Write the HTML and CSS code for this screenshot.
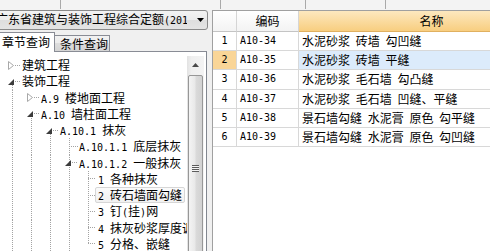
FILE: index.html
```html
<!DOCTYPE html>
<html lang="zh-CN">
<head>
<meta charset="utf-8">
<title>定额查询</title>
<link rel="stylesheet" href="styles.css">
</head>
<body>
<div class="top">
  <span class="tc w60"></span><span class="tc w160"></span><span class="tc w85"></span><span class="tc w80"></span>
</div>
<div class="main">
  <div class="left">
    <div class="combo">
      <span class="combo-text">广东省建筑与装饰工程综合定额<span class="m">(2010)</span></span>
      <span class="combo-btn"><svg width="7" height="4" viewBox="0 0 7 4"><path d="M0 0H7L3.5 4Z" fill="#000"/></svg></span>
    </div>
    <div class="tabs">
      <div class="tab sel">章节查询</div>
      <div class="tab">条件查询</div>
    </div>
    <div class="treebox">
      <div class="tree">
        <div class="row"><div class="x c"><svg width="6" height="9" viewBox="0 0 6 9"><path d="M0.5 0.5L5.5 4.5L0.5 8.5Z" fill="#fff" stroke="#a8a8a8"/></svg></div><span class="lb">建筑工程</span></div>
        <div class="row"><div class="x e"><svg class="ex" width="6" height="6" viewBox="0 0 6 6"><path d="M6 0V6H0Z" fill="#3c3c3c"/></svg></div><span class="lb">装饰工程</span></div>
        <div class="row"><div class="g v"></div><div class="x c"><svg width="6" height="9" viewBox="0 0 6 9"><path d="M0.5 0.5L5.5 4.5L0.5 8.5Z" fill="#fff" stroke="#a8a8a8"/></svg></div><span class="lb"><span class="m">A.9 </span>楼地面工程</span></div>
        <div class="row"><div class="g v"></div><div class="x e"><svg class="ex" width="6" height="6" viewBox="0 0 6 6"><path d="M6 0V6H0Z" fill="#3c3c3c"/></svg></div><span class="lb"><span class="m">A.10 </span>墙柱面工程</span></div>
        <div class="row"><div class="g v"></div><div class="g v"></div><div class="x e"><svg class="ex" width="6" height="6" viewBox="0 0 6 6"><path d="M6 0V6H0Z" fill="#3c3c3c"/></svg></div><span class="lb"><span class="m">A.10.1 </span>抹灰</span></div>
        <div class="row"><div class="g v"></div><div class="g v"></div><div class="g v"></div><div class="x tee tee-l"></div><span class="lb"><span class="m">A.10.1.1 </span>底层抹灰</span></div>
        <div class="row"><div class="g v"></div><div class="g v"></div><div class="g v"></div><div class="x et"><svg class="ex" width="6" height="6" viewBox="0 0 6 6"><path d="M6 0V6H0Z" fill="#3c3c3c"/></svg></div><span class="lb"><span class="m">A.10.1.2 </span>一般抹灰</span></div>
        <div class="row"><div class="g v"></div><div class="g v"></div><div class="g v"></div><div class="g v"></div><div class="x tee"></div><span class="lb"><span class="m">1 </span>各种抹灰</span></div>
        <div class="row"><div class="g v"></div><div class="g v"></div><div class="g v"></div><div class="g v"></div><div class="x tee"></div><span class="lb hl"><span class="m">2 </span>砖石墙面勾缝</span></div>
        <div class="row"><div class="g v"></div><div class="g v"></div><div class="g v"></div><div class="g v"></div><div class="x tee"></div><span class="lb"><span class="m">3 </span>钉<span class="m">(</span>挂<span class="m">)</span>网</span></div>
        <div class="row"><div class="g v"></div><div class="g v"></div><div class="g v"></div><div class="g v"></div><div class="x tee"></div><span class="lb"><span class="m">4 </span>抹灰砂浆厚度调整</span></div>
        <div class="row"><div class="g v"></div><div class="g v"></div><div class="g v"></div><div class="g v"></div><div class="x ell"></div><span class="lb"><span class="m">5 </span>分格、嵌缝</span></div>
      </div>
      <div class="vscroll">
        <div class="sb-up"><svg width="7" height="4" viewBox="0 0 7 4"><path d="M0 4L3.5 0L7 4Z" fill="#4a4a4a"/></svg></div>
        <div class="thumb"><span class="grip"></span></div>
      </div>
    </div>
  </div>
  <div class="split"></div>
  <div class="grid">
    <div class="gt">
      <div class="hd num"></div>
      <div class="hd">编码</div>
      <div class="hd act">名称</div>

      <div class="cell num m">1</div>
      <div class="cell code m">A10-34</div>
      <div class="cell name">水泥砂浆 砖墙 勾凹缝</div>

      <div class="cell num m cur">2</div>
      <div class="cell code m">A10-35</div>
      <div class="cell name selc">水泥砂浆 砖墙 平缝</div>

      <div class="cell num m">3</div>
      <div class="cell code m">A10-36</div>
      <div class="cell name">水泥砂浆 毛石墙 勾凸缝</div>

      <div class="cell num m">4</div>
      <div class="cell code m">A10-37</div>
      <div class="cell name">水泥砂浆 毛石墙 凹缝、平缝</div>

      <div class="cell num m">5</div>
      <div class="cell code m">A10-38</div>
      <div class="cell name">景石墙勾缝 水泥膏 原色 勾平缝</div>

      <div class="cell num m">6</div>
      <div class="cell code m">A10-39</div>
      <div class="cell name">景石墙勾缝 水泥膏 原色 勾凹缝</div>
    </div>
  </div>
</div>
</body>
</html>
```

FILE: styles.css
```css
:root {
  --dv: repeating-linear-gradient(to bottom, #a3a3a3 0 1px, transparent 1px 2px);
  --dh: repeating-linear-gradient(to right, #a3a3a3 0 1px, transparent 1px 2px);
}
* { box-sizing: border-box; }
html, body { margin: 0; padding: 0; }
body {
  width: 490px;
  height: 251px;
  overflow: hidden;
  background: #f0f0f0;
  font-family: "Noto Sans CJK SC", sans-serif;
  font-size: 12px;
  color: #000;
}
.m {
  font-family: "DejaVu Sans Mono", monospace;
  font-size: 10px;
}

/* top strip */
.top { height: 10px; display: flex; background: #f3f3f3; }
.tc { height: 9px; border-right: 1px solid #a9a9a9; flex: none; }
.w60 { width: 61px; }
.w160 { width: 160px; }
.w85 { width: 85px; }
.w80 { width: 80px; }

.main { display: flex; height: 250px; }

/* left column */
.left {
  width: 215px;
  margin-left: -8px;
  flex: none;
  display: flex;
  flex-direction: column;
}
.combo {
  height: 20px;
  margin-right: -1px;
  border: 1px solid #8a8a8a;
  border-radius: 3px;
  background: linear-gradient(#f3f3f3, #ebebeb 50%, #dedede 50%, #e4e4e4);
  display: flex;
  align-items: center;
}
.combo-text {
  flex: 1;
  min-width: 0;
  overflow: hidden;
  white-space: nowrap;
  padding-left: 3px;
  line-height: 18px;
}
.combo-btn {
  width: 20px;
  flex: none;
  display: flex;
  justify-content: center;
  padding-left: 6px;
}
.combo-btn svg { display: block; }

.tabs {
  margin-top: 2px;
  height: 20px;
  display: flex;
  align-items: flex-end;
  padding-left: 6px;
  border-bottom: 1px solid #898c95;
}
.tab {
  height: 16px;
  border: 1px solid #898c95;
  border-bottom: none;
  border-left: none;
  padding: 0 1px 0 5px;
  line-height: 15px;
  background: linear-gradient(#f2f2f2, #ebebeb 50%, #dddddd 50%, #d4d4d4);
  white-space: nowrap;
}
.tab.sel {
  height: 20px;
  margin-bottom: -1px;
  border-left: 1px solid #898c95;
  background: #fff;
  padding: 0 4px 0 3px;
  line-height: 18px;
}

.treebox {
  flex: 1;
  display: flex;
  background: #fff;
  border: 1px solid #828790;
  border-top: none;
  min-height: 0;
}
.tree {
  flex: 1;
  min-width: 0;
  overflow: hidden;
  padding: 5px 0 0 10px;
}
.row {
  height: 16.25px;
  display: flex;
  white-space: nowrap;
}
.g { width: 19px; flex: none; }
.g.v { background: var(--dv) 9px 0 / 1px 100% no-repeat; }
.x {
  width: 19px;
  flex: none;
  display: flex;
  align-items: center;
  padding-left: 5px;
}
.x svg { display: block; }
.x svg.ex { margin-top: 1px; }
.x.c { background: var(--dh) 12px 50% / 6px 1px no-repeat; }
.x.e {
  background:
    var(--dh) 12px 50% / 6px 1px no-repeat,
    var(--dv) 9px 100% / 1px 40% no-repeat;
}
.x.et {
  background:
    var(--dh) 12px 50% / 6px 1px no-repeat,
    var(--dv) 9px 0 / 1px 100% no-repeat;
}
.x.tee {
  background:
    var(--dh) 9px 50% / 7px 1px no-repeat,
    var(--dv) 9px 0 / 1px 100% no-repeat;
}
.x.tee.tee-l {
  background:
    var(--dh) 9px 50% / 9px 1px no-repeat,
    var(--dv) 9px 0 / 1px 100% no-repeat;
}
.x.ell {
  background:
    var(--dh) 9px 50% / 7px 1px no-repeat,
    var(--dv) 9px 0 / 1px 50% no-repeat;
}
.lb { line-height: 16px; }
.lb.hl {
  margin-left: -3px;
  padding: 0 2px;
  border: 1px solid #d6d6d6;
  border-radius: 2px;
  background: linear-gradient(#fbfbfb, #f1f1f1);
  line-height: 14px;
}

.vscroll {
  width: 17px;
  flex: none;
  margin: 4px 2px 0 0;
  background: linear-gradient(to right, #e2e2e2, #efefef 25%, #f3f3f3);
  display: flex;
  flex-direction: column;
  overflow: hidden;
}
.sb-up {
  height: 17px;
  flex: none;
  display: flex;
  align-items: center;
  justify-content: center;
}
.sb-up svg { display: block; }
.thumb {
  margin: 2px 1px 0;
  height: 220px;
  flex: none;
  border: 1px solid #979797;
  border-radius: 2px;
  background: linear-gradient(to right, #f4f4f4, #e9e9e9 45%, #dadada 55%, #d2d2d2);
  display: flex;
  justify-content: center;
  padding-top: 89px;
}
.grip {
  width: 7px;
  height: 7px;
  background: repeating-linear-gradient(to bottom, #5c5c5c 0 1px, #f4f4f4 1px 2px);
}

.split { width: 5px; flex: none; }

/* grid */
.grid {
  flex: 1;
  min-width: 0;
  overflow: hidden;
  background: #fff;
  border-left: 1px solid #a0a0a0;
  border-top: 1px solid #a0a0a0;
}
.gt {
  display: grid;
  grid-template-columns: 24px 62px 266px;
  grid-template-rows: 21px repeat(6, 19.2px);
  width: 352px;
}
.hd {
  border-right: 1px solid #d5d5d5;
  border-bottom: 1px solid #c4c4c4;
  background: linear-gradient(#ffffff, #f3f3f3);
  text-align: center;
  line-height: 20px;
}
.hd.act {
  background: linear-gradient(#fde8bf, #f8ce80);
  border-bottom-color: #e0b060;
  border-right-color: #e5b86a;
}
.cell {
  border-right: 1px solid #d8d8d8;
  border-bottom: 1px solid #d8d8d8;
  white-space: nowrap;
  overflow: hidden;
  line-height: 18px;
}
.cell.num { text-align: center; background: #fff; }
.cell.num.cur { background: #f9d597; }
.cell.code { padding-left: 3px; }
.cell.name { padding-left: 3px; word-spacing: 3px; }
.cell.name.selc { background: #dcebfb; }
```
